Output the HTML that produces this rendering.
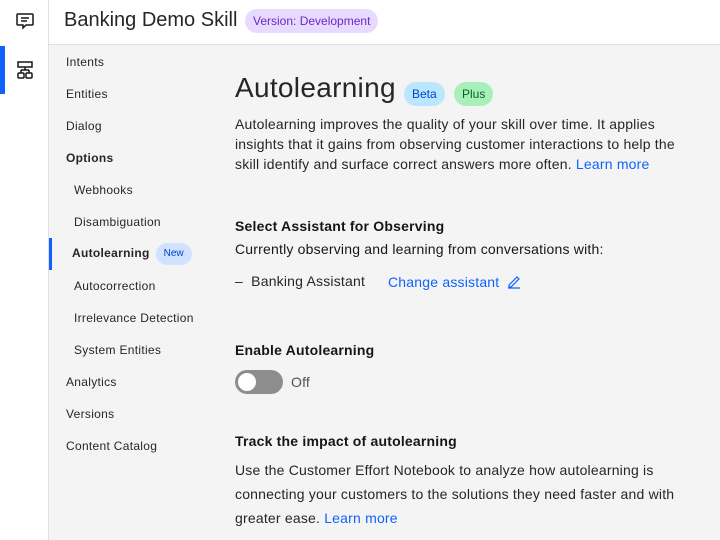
<!DOCTYPE html>
<html><head><meta charset="utf-8"><style>
*{margin:0;padding:0;box-sizing:border-box}
body{width:720px;height:540px;overflow:hidden;background:#f4f4f4;font-family:"Liberation Sans","DejaVu Sans",sans-serif;color:#161616;position:relative}
.rail{position:absolute;left:0;top:0;width:49px;height:540px;background:#fff;border-right:1px solid #e0e0e0}
.rail .act{position:absolute;left:0;top:46px;width:5px;height:48px;background:#0f62fe}
.top{position:absolute;left:49px;top:0;right:0;height:45px;background:#fff;border-bottom:1px solid #e0e0e0}
.title{position:absolute;left:15px;top:9px;font-size:20px;color:#262626}
.ver{position:absolute;left:196px;top:9px;height:24px;padding:0 8px;line-height:24px;border-radius:12px;background:#e8daff;color:#6929c4;font-size:12px}
.nav div{position:absolute;font-size:12px;color:#262626;letter-spacing:0.3px}
.navbar{position:absolute;left:49px;top:238px;width:3px;height:32px;background:#0f62fe}
.new{display:inline-block;margin-left:6px;padding:0 8px;height:22px;line-height:22px;border-radius:11px;background:#d0e2ff;color:#0043ce;font-size:10px;font-weight:normal;vertical-align:middle;letter-spacing:0}
h1{position:absolute;left:235px;top:72px;font-size:28px;font-weight:normal;color:#262626;letter-spacing:0.3px}
.tag{position:absolute;top:82px;height:24px;line-height:24px;padding:0 8px;border-radius:12px;font-size:12px}
p{font-size:14px;line-height:20px;letter-spacing:0.2px}
a{color:#0f62fe;text-decoration:none}
.b{font-weight:bold;font-size:14px;letter-spacing:0.2px}
</style></head><body>
<div class="rail">
<div class="act"></div>
<svg style="position:absolute;left:15px;top:12px" width="20" height="18" viewBox="0 0 20 18" fill="none" stroke="#161616" stroke-width="1.5"><path d="M3 2h14a1 1 0 0 1 1 1v9a1 1 0 0 1-1 1h-6l-3 3v-3H3a1 1 0 0 1-1-1V3a1 1 0 0 1 1-1z"/><path d="M6 6h8M6 9h6"/></svg>
<svg style="position:absolute;left:15px;top:60px" width="20" height="20" viewBox="0 0 20 20" fill="none" stroke="#161616" stroke-width="1.5"><rect x="3" y="2" width="14" height="5"/><path d="M10 7v3M6 10h8M6 10v3M14 10v3"/><rect x="3" y="13" width="6" height="5" rx="1"/><rect x="11" y="13" width="6" height="5" rx="1"/></svg>
</div>
<div class="top"><div class="title">Banking Demo Skill</div><div class="ver">Version: Development</div></div>
<div class="navbar"></div>
<div class="nav">
<div style="left:66px;top:55px">Intents</div>
<div style="left:66px;top:87px">Entities</div>
<div style="left:66px;top:119px">Dialog</div>
<div style="left:66px;top:151px;font-weight:bold">Options</div>
<div style="left:74px;top:183px">Webhooks</div>
<div style="left:74px;top:215px">Disambiguation</div>
<div style="left:72px;top:243px;font-weight:bold">Autolearning<span class="new">New</span></div>
<div style="left:74px;top:279px">Autocorrection</div>
<div style="left:74px;top:311px">Irrelevance Detection</div>
<div style="left:74px;top:343px">System Entities</div>
<div style="left:66px;top:375px">Analytics</div>
<div style="left:66px;top:407px">Versions</div>
<div style="left:66px;top:439px">Content Catalog</div>
</div>
<h1>Autolearning</h1>
<div class="tag" style="left:404px;background:#bae6ff;color:#0043ce">Beta</div>
<div class="tag" style="left:454px;background:#a7f0ba;color:#0e6027">Plus</div>
<p style="position:absolute;left:235px;top:114px;width:480px;color:#262626;white-space:nowrap">Autolearning improves the quality of your skill over time. It applies<br>insights that it gains from observing customer interactions to help the<br>skill identify and surface correct answers more often. <a>Learn more</a></p>
<div class="b" style="position:absolute;left:235px;top:218px">Select Assistant for Observing</div>
<p style="position:absolute;left:235px;top:239px">Currently observing and learning from conversations with:</p>
<p style="position:absolute;left:235px;top:271px;color:#262626">–&nbsp;&nbsp;Banking Assistant</p>
<p style="position:absolute;left:388px;top:272px"><a>Change assistant</a></p>
<svg style="position:absolute;left:506px;top:274px" width="16" height="16" viewBox="0 0 16 16" fill="none" stroke="#0f62fe" stroke-width="1.2"><path d="M2 14h12M3 11l8-8 2 2-8 8H3z"/></svg>
<div class="b" style="position:absolute;left:235px;top:342px">Enable Autolearning</div>
<div style="position:absolute;left:235px;top:370px;width:48px;height:24px;border-radius:12px;background:#8d8d8d"><div style="position:absolute;left:3px;top:3px;width:18px;height:18px;border-radius:9px;background:#fff"></div></div>
<p style="position:absolute;left:291px;top:372px;color:#525252">Off</p>
<div class="b" style="position:absolute;left:235px;top:433px">Track the impact of autolearning</div>
<p style="position:absolute;left:235px;top:458px;width:480px;line-height:24px;color:#262626;white-space:nowrap">Use the Customer Effort Notebook to analyze how autolearning is<br>connecting your customers to the solutions they need faster and with<br>greater ease. <a>Learn more</a></p>
</body></html>
